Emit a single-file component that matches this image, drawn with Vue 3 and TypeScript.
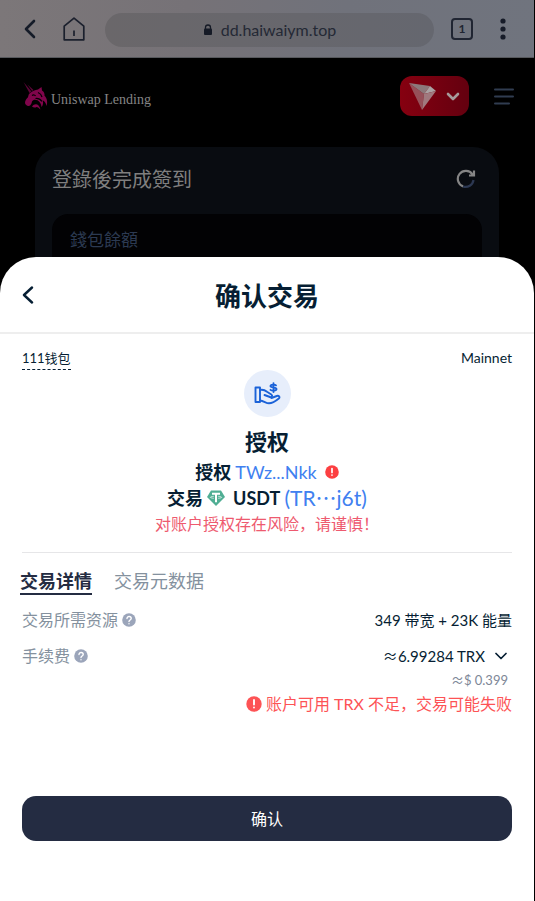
<script setup lang="ts">
import { ref } from 'vue'

type Tab = { id: string; label: string }

const tabs: Tab[] = [
  { id: 'detail', label: '交易详情' },
  { id: 'meta', label: '交易元数据' },
]
const activeTab = ref('detail')
</script>

<template>
  <div class="page">
    <header class="browser">
      <button class="icon-btn" type="button" aria-label="后退">
        <svg width="14" height="20" viewBox="0 0 14 20"><path d="M11 2 3 10l8 8" fill="none" stroke="#151b28" stroke-width="2.6" stroke-linecap="round" stroke-linejoin="round" /></svg>
      </button>
      <button class="icon-btn home" type="button" aria-label="主页">
        <svg width="22" height="24" viewBox="0 0 22 24"><path d="M1.2 9.2 11 1.2l9.800 8V22.800H1.200ZM11 13.500v5.500" fill="none" stroke="#1b202d" stroke-width="1.7" stroke-linejoin="round" /></svg>
      </button>
      <a class="address" href="#">
        <svg width="10" height="12" viewBox="0 0 10 12"><path d="M2.500 5V3.500a2.500 2.500 0 0 1 5 0V5" fill="none" stroke="#151a26" stroke-width="1.3" /><rect x="1" y="4.500" width="8" height="6.500" rx="1" fill="#151a26" /></svg>
        <span>dd.haiwaiym.top</span>
      </a>
      <button class="tab-count" type="button" aria-label="标签页">1</button>
      <button class="icon-btn more" type="button" aria-label="更多">
        <svg width="6" height="22" viewBox="0 0 6 22" fill="#161b28"><circle cx="3" cy="3" r="2.600" /><circle cx="3" cy="11" r="2.600" /><circle cx="3" cy="19" r="2.600" /></svg>
      </button>
    </header>

    <div class="site">
      <nav class="site-bar">
        <a class="brand" href="#">
          <svg width="25" height="30" viewBox="0 0 25 30">
            <path d="M.5 1 8.500 10.500 6.500 12Z M4.500 3.500 10.500 9l-1.500 1Z" fill="#5c0437" />
            <path d="M6.500 12.500C9 10 12 9 15 8.500L18.500 6l.5 3.500c2 1.200 2.800 3 2.500 5.200 2.800 2.800 3.200 6.800 2 10.300-.5-3-1.700-4.800-3.800-5.800.8 3 .3 5-1.200 6.800-.3-3.200-1.700-5.400-4-6.700-2.500-1.200-4.500-.6-5.500 1.200-.5 2.500-1.300 3.700-2.500 4.200C4.500 25.500 2.500 24 2 22c0-2.800 1.500-4 2.800-5.500.7-1.400.6-3 1.700-4Z" fill="#80054b" />
            <path d="M9 14.500c1.500-1 3-.5 3.500.5M15 11.500c2 .8 3.500 2.500 4 4.500M12.500 17.500c3-.5 5 1 6.500 3" fill="none" stroke="#000" stroke-width="1.200" />
            <path d="M9 25.500c2.500-3.500 7-3.500 8.500 3-1.800-1.700-3-2.500-4-2.500-1 .8-3 1-4.500-.5Z" fill="#80054b" />
          </svg>
          <span>Uniswap Lending</span>
        </a>
        <button class="chain" type="button" aria-label="选择网络">
          <svg width="28" height="27" viewBox="0 0 28 27">
            <path d="M0 0 15 11 13 27Z" fill="#965059" />
            <path d="M0 0 21 3 15 11Z" fill="#8c797b" />
            <path d="m21 3 6 5-12 3Z" fill="#aaa2a3" />
            <path d="M27 8 13 27l2-16Z" fill="#a0797e" />
          </svg>
          <svg width="14" height="9" viewBox="0 0 14 9"><path d="m2 2 5 5 5-5" fill="none" stroke="#a69a9b" stroke-width="2.600" stroke-linecap="round" stroke-linejoin="round" /></svg>
        </button>
        <button class="icon-btn" type="button" aria-label="菜单">
          <svg width="20" height="17" viewBox="0 0 20 17"><path d="M1 1.500h18M1 8.500h18M1 15.500h14" stroke="#303c50" stroke-width="2" stroke-linecap="round" /></svg>
        </button>
      </nav>
      <section class="card">
        <div class="card-head">
          <h2>登錄後完成簽到</h2>
          <button class="icon-btn" type="button" aria-label="重新整理">
            <svg width="20" height="20" viewBox="0 0 20 20" fill="none" stroke-width="2.200"><path d="M17.500 11a8 8 0 0 1-10.500 6.500" stroke="#2c3852" /><path d="M7 17.400A8 8 0 1 1 16.500 5.500M18 1.500V6.500H13" stroke="#858585" /></svg>
          </button>
        </div>
        <div class="balance">錢包餘額</div>
      </section>
    </div>

    <main class="sheet">
      <header class="sheet-head">
        <button class="icon-btn" type="button" aria-label="返回">
          <svg width="12" height="18" viewBox="0 0 12 18"><path d="m10 1.500-8 7.500 8 7.500" fill="none" stroke="#061e33" stroke-width="2.400" stroke-linecap="round" stroke-linejoin="round" /></svg>
        </button>
        <h1>确认交易</h1>
      </header>

      <div class="content">
        <div class="account">
          <a class="wallet" href="#">111钱包</a>
          <span>Mainnet</span>
        </div>

        <section class="summary">
          <div class="badge">
            <svg width="28" height="24" viewBox="0 0 28 24" fill="none" stroke="#1b62d8" stroke-width="1.900" stroke-linecap="round" stroke-linejoin="round">
              <path d="M2.500 5.500H7V20H2.500Z" />
              <path d="M7 8c3-.8 4.800 0 7 1.800l4.300 2.700c1.700 1.200.5 3.200-1.300 2.500L11.500 13" />
              <path d="M7 18.500c3.800.3 6 2.800 9 2.800 4 0 6.800-2.300 9.800-4.800 1.500-1.600 0-3.200-2-2.500l-5.300 2" />
              <path d="M23 3.400c-1-1.100-5.500-1.300-5.500.7 0 2.200 6 .8 6 3 0 2-4.800 1.900-6 .7M20.500 1.200v8.800" />
            </svg>
          </div>
          <h2>授权</h2>
          <p class="line">
            <strong>授权</strong>
            <a class="spender" href="#">TWz...Nkk</a>
            <svg class="alert" width="14" height="14" viewBox="0 0 14 14"><circle cx="7" cy="7" r="6.800" fill="#fc3f41" /><path d="M7 3.500v4M7 10v.1" stroke="#fff" stroke-width="1.700" stroke-linecap="round" /></svg>
          </p>
          <p class="line">
            <strong>交易</strong>
            <svg class="token" width="18" height="16" viewBox="0 0 18 16"><path d="M4 .5h10l4 6.500-9 9L0 7Z" fill="#50ae94" /><path d="M5 3.800h8M9 3.800v8.500" stroke="#fff" stroke-width="2" /><path d="M6.800 6.300c-4.500.4-4.500 1.600 0 2M11.200 6.300c4.500.4 4.500 1.600 0 2" fill="none" stroke="#fff" stroke-width=".7" /></svg>
            <strong>USDT</strong>
            <a class="contract" href="#">(TR<span class="ellipsis" lang="zh-Hant">…</span>j6t)</a>
          </p>
          <p class="risk">对账户授权存在风险，请谨慎！</p>
        </section>

        <div class="tabs" role="tablist">
          <button v-for="tab in tabs" :key="tab.id" class="tab" :class="{ active: activeTab === tab.id }" type="button" role="tab" :aria-selected="activeTab === tab.id" @click="activeTab = tab.id">{{ tab.label }}</button>
        </div>

        <dl class="fees">
          <div class="fee-row">
            <dt>交易所需资源
              <svg width="14" height="14" viewBox="0 0 14 14"><circle cx="7" cy="7" r="6.800" fill="#9ba5ba" /><path d="M5 5.500c0-2.700 4.200-2.500 4.200 0C9.200 7 7 7 7 8.600M7 10.700v.1" fill="none" stroke="#fff" stroke-width="1.400" stroke-linecap="round" /></svg>
            </dt>
            <dd>349 带宽 + 23K 能量</dd>
          </div>
          <div class="fee-row">
            <dt>手续费
              <svg width="14" height="14" viewBox="0 0 14 14"><circle cx="7" cy="7" r="6.800" fill="#9ba5ba" /><path d="M5 5.500c0-2.700 4.200-2.500 4.200 0C9.200 7 7 7 7 8.600M7 10.700v.1" fill="none" stroke="#fff" stroke-width="1.400" stroke-linecap="round" /></svg>
            </dt>
            <dd>
              <button class="fee-toggle" type="button">
                <span><span class="cjk">≈</span>6.99284 TRX</span>
                <svg width="12" height="8" viewBox="0 0 12 8"><path d="m1 1.500 5 5 5-5" fill="none" stroke="#061e33" stroke-width="1.700" stroke-linecap="round" stroke-linejoin="round" /></svg>
              </button>
            </dd>
          </div>
        </dl>
        <p class="fiat"><span class="cjk">≈</span>$ 0.399</p>
        <p class="error" role="alert">
          <svg width="16" height="16" viewBox="0 0 16 16"><circle cx="8" cy="8" r="7.700" fill="#fd5355" /><path d="M8 4v4.500M8 11.500v.1" stroke="#fff" stroke-width="1.900" stroke-linecap="round" /></svg>
          <span>账户可用 TRX 不足，交易可能失败</span>
        </p>
        <button class="confirm" type="button">确认</button>
      </div>
    </main>
  </div>
</template>

<style>
body {
  margin: 0;
  background: #000;
}
</style>

<style scoped>
* {
  box-sizing: border-box;
}
h1, h2, p, dl, dd {
  margin: 0;
}
a {
  color: inherit;
  text-decoration: none;
}
button {
  padding: 0;
  border: 0;
  background: none;
  color: inherit;
  font: inherit;
  cursor: pointer;
}
svg {
  display: block;
  flex: none;
}
.page {
  display: flex;
  flex-direction: column;
  min-height: 100vh;
  padding-right: 1px;
  color: #061e33;
  font-family: Lato, "Noto Sans CJK SC", sans-serif;
}
.cjk {
  font-family: "Noto Sans CJK SC", sans-serif;
  line-height: 1;
}
.ellipsis {
  font-family: "Noto Sans CJK TC", sans-serif;
  line-height: 1;
}
.icon-btn {
  display: flex;
}
.browser {
  display: flex;
  align-items: center;
  height: 58px;
  padding: 0 28px 0 23px;
  border-bottom: 1px solid #56585c;
  background: linear-gradient(90deg, #7c7779, #767277 35%, #70727b 65%, #70747e);
}
.home {
  margin-left: 26px;
}
.address {
  display: flex;
  flex: 1;
  align-items: center;
  justify-content: center;
  gap: 8px;
  height: 34px;
  margin: 2px 17px 0 20px;
  border-radius: 17px;
  background: linear-gradient(90deg, #6a676a, #65676f);
  color: #242935;
  font-size: 16px;
}
.tab-count {
  width: 22px;
  height: 22px;
  border: 2px solid #202532;
  border-radius: 4px;
  color: #202532;
  font-size: 12px;
  font-weight: 700;
  line-height: 18px;
}
.more {
  margin-left: 27px;
}
.site {
  background: #000;
}
.site-bar {
  display: flex;
  align-items: center;
  height: 76px;
  padding: 0 20px 0 23px;
}
.brand {
  display: flex;
  flex: 1;
  align-items: center;
  gap: 3px;
  color: #858585;
  font: 14px "Liberation Serif", serif;
}
.brand span {
  padding-top: 8px;
}
.chain {
  display: flex;
  align-items: center;
  gap: 9px;
  height: 40px;
  margin-right: 25px;
  padding: 0 9px;
  border-radius: 12px;
  background: linear-gradient(90deg, #860010, #64000f);
}
.card {
  margin: 13px 35px 0;
  padding: 0 17px;
  border-radius: 26px 26px 0 0;
  background: #090c11;
  font-family: Lato, "Noto Sans CJK TC", sans-serif;
}
.card-head {
  display: flex;
  align-items: center;
  justify-content: space-between;
  height: 67px;
  padding: 0 6px 4px 0;
}
.card-head h2 {
  color: #7f7f7f;
  font-size: 20px;
  font-weight: 400;
}
.balance {
  height: 96px;
  padding: 14px 18px;
  border-radius: 16px 16px 0 0;
  background: #020204;
  color: #2c3a52;
  font-size: 17px;
  line-height: 24px;
}
.sheet {
  position: relative;
  flex: 1;
  margin-top: -53px;
  border-radius: 36px 36px 0 0;
  background: #fff;
}
.sheet-head {
  display: grid;
  grid-template-columns: 24px 1fr 24px;
  align-items: center;
  height: 77px;
  padding: 0 22px;
  border-bottom: 2px solid #eee;
}
.sheet-head h1 {
  font-size: 26px;
  font-weight: 700;
  text-align: center;
}
.content {
  padding: 0 22px 24px;
}
.account {
  display: flex;
  align-items: flex-start;
  justify-content: space-between;
  height: 36px;
  padding-top: 13px;
  font-size: 14px;
  line-height: 22px;
}
.wallet {
  border-bottom: 1px dashed #061e33;
  font-size: 13px;
}
.summary {
  display: flex;
  flex-direction: column;
  align-items: center;
  padding-bottom: 15px;
  border-bottom: 1px solid #e6e6e8;
}
.badge {
  display: grid;
  place-items: center;
  width: 47px;
  height: 47px;
  border-radius: 50%;
  background: #e7eefb;
}
.summary h2 {
  margin-top: 8px;
  font-size: 22px;
  line-height: 34px;
}
.line {
  display: flex;
  align-items: center;
  height: 26px;
  gap: 4px;
  font-size: 18px;
  line-height: 26px;
}
.spender,
.contract {
  color: #4080f0;
}
.contract {
  font-size: 21px;
}
.alert {
  margin-left: 4px;
}
.token {
  margin-right: 4px;
}
.risk {
  color: #ee5a6f;
  font-size: 16px;
  line-height: 26px;
}
.tabs {
  display: flex;
  gap: 22px;
  margin: 16px 0 12px -2px;
}
.tab {
  height: 26px;
  border-bottom: 2px solid transparent;
  color: #84919e;
  font-size: 18px;
  line-height: 24px;
}
.tab.active {
  border-color: #242c42;
  color: #242c42;
  font-weight: 700;
}
.fees {
  display: grid;
  gap: 10px;
  font-size: 16px;
  line-height: 26px;
}
.fee-row {
  display: flex;
  justify-content: space-between;
}
.fee-row dt {
  display: flex;
  align-items: center;
  gap: 4px;
  color: #84919e;
}
.fee-row dd {
  font-size: 15px;
}
.fee-toggle {
  display: flex;
  align-items: center;
  gap: 10px;
  padding-right: 5px;
}
.fiat {
  padding-right: 4px;
  color: #7d8797;
  font-size: 13px;
  line-height: 22px;
  text-align: right;
}
.error {
  display: flex;
  align-items: center;
  justify-content: flex-end;
  gap: 4px;
  color: #fd5355;
  font-size: 16px;
  line-height: 26px;
}
.confirm {
  width: 100%;
  height: 45px;
  margin-top: 79px;
  padding-bottom: 2px;
  border-radius: 14px;
  background: #242c42;
  color: #fff;
  font-size: 16px;
}
</style>
